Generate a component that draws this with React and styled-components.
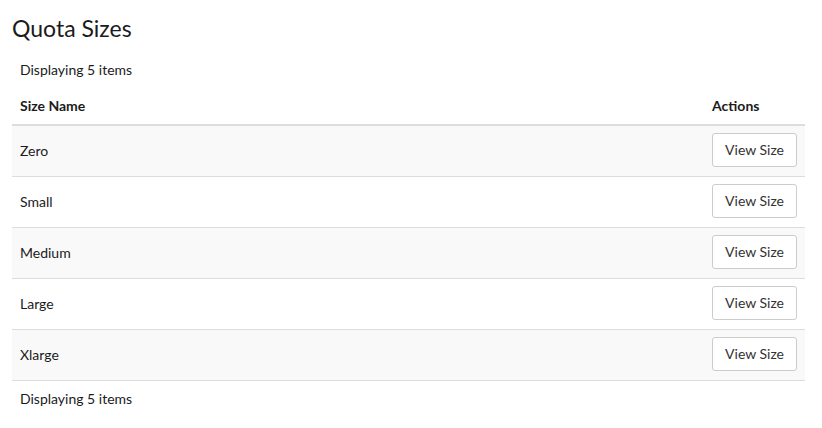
import React from "react";
import styled, { createGlobalStyle } from "styled-components";

const GlobalStyle = createGlobalStyle`
  body {
    margin: 0;
    background: #fff;
    font-family: Lato, "Open Sans", sans-serif;
    color: #1b1b1b;
  }
`;

const Page = styled.div`
  padding: 0 17px 0 12px;
`;

const Title = styled.h1`
  font-size: 23px;
  font-weight: 400;
  margin: 0;
  padding-top: 14px;
  line-height: 28px;
  color: #1b1b1b;
`;

const Table = styled.table`
  width: 100%;
  border-collapse: collapse;
  margin-top: 10px;
  font-size: 14px;
`;

const Caption = styled.td`
  padding: 8px 8px;
  height: 20px;
  line-height: 20px;
`;

const HeadCell = styled.th`
  text-align: left;
  font-weight: 700;
  padding: 8px 8px 9px;
  line-height: 19px;
  border-bottom: 2px solid #ddd;
  width: ${(p) => (p.$narrow ? "1%" : "auto")};
`;

const Row = styled.tr`
  background: ${(p) => (p.$striped ? "#f9f9f9" : "#fff")};
  border-bottom: 1px solid #ddd;
`;

const Cell = styled.td`
  padding: 7px 8px 9px;
  height: 34px;
  vertical-align: middle;
  text-align: ${(p) => (p.$right ? "right" : "left")};
`;

const Button = styled.button`
  font-family: Lato, "Open Sans", sans-serif;
  font-size: 14px;
  color: #333;
  background: #fff;
  border: 1px solid #ccc;
  border-radius: 3px;
  padding: 7px 12px;
  line-height: 18px;
  white-space: nowrap;
  cursor: pointer;
`;

const sizes = ["Zero", "Small", "Medium", "Large", "Xlarge"];

export default function App() {
  return (
    <Page>
      <GlobalStyle />
      <Title>Quota Sizes</Title>
      <Table>
        <thead>
          <tr>
            <Caption colSpan={2}>Displaying 5 items</Caption>
          </tr>
          <tr>
            <HeadCell>Size Name</HeadCell>
            <HeadCell $narrow>Actions</HeadCell>
          </tr>
        </thead>
        <tbody>
          {sizes.map((s, i) => (
            <Row key={s} $striped={i % 2 === 0}>
              <Cell>{s}</Cell>
              <Cell $right>
                <Button>View Size</Button>
              </Cell>
            </Row>
          ))}
        </tbody>
        <tfoot>
          <tr>
            <Caption colSpan={2}>Displaying 5 items</Caption>
          </tr>
        </tfoot>
      </Table>
    </Page>
  );
}
